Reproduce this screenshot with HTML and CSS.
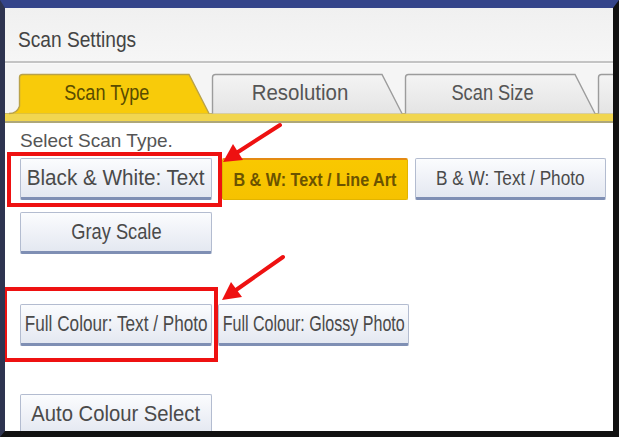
FILE: index.html
```html
<!DOCTYPE html>
<html>
<head>
<meta charset="utf-8">
<link rel="stylesheet" href="styles.css">
</head>
<body>
<div class="screen">
  <div class="header"><span class="t sx87">Scan Settings</span></div>
  <div class="sep"></div>
  <div class="tabs">
    <div class="tab active">
      <svg class="tab-shape" viewBox="0 0 192 41" preserveAspectRatio="none"><path d="M-9,41.5 Q-1,41.5 1.5,34 V4.5 Q1.5,1.5 4.5,1.5 H171 L191,41.5" fill="#f8cb0a" stroke="#b9a24a" stroke-width="1.4"/></svg>
      <span class="t sx82">Scan Type</span>
    </div>
    <div class="tab">
      <svg class="tab-shape" viewBox="0 0 192 41" preserveAspectRatio="none"><defs><linearGradient id="g1" x1="0" y1="0" x2="0" y2="1"><stop offset="0" stop-color="#f4f4f4"/><stop offset="1" stop-color="#e4e4e4"/></linearGradient></defs><path d="M1.5,41.5 V4.5 Q1.5,1.5 4.5,1.5 H171 L191,41.5" fill="url(#g1)" stroke="#9c9c9c" stroke-width="1.4"/></svg>
      <span class="t sx93">Resolution</span>
    </div>
    <div class="tab">
      <svg class="tab-shape" viewBox="0 0 192 41" preserveAspectRatio="none"><path d="M1.5,41.5 V4.5 Q1.5,1.5 4.5,1.5 H171 L191,41.5" fill="url(#g1)" stroke="#9c9c9c" stroke-width="1.4"/></svg>
      <span class="t sx83">Scan Size</span>
    </div>
    <div class="tab">
      <svg class="tab-shape" viewBox="0 0 192 41" preserveAspectRatio="none"><path d="M1.5,41.5 V4.5 Q1.5,1.5 4.5,1.5 H171 L191,41.5" fill="url(#g1)" stroke="#9c9c9c" stroke-width="1.4"/></svg>
    </div>
  </div>
  <div class="strip"></div>
  <div class="content">
    <div class="prompt">Select Scan Type.</div>
    <div class="row row1">
      <div class="btn w192"><span class="t sx94">Black &amp; White: Text</span></div>
      <div class="btn sel w186 ml10"><span class="t sx80b">B &amp; W: Text / Line Art</span></div>
      <div class="btn w191 ml7"><span class="t sx86">B &amp; W: Text / Photo</span></div>
    </div>
    <div class="row row2">
      <div class="btn w192"><span class="t sx83">Gray Scale</span></div>
    </div>
    <div class="row row3">
      <div class="btn w192"><span class="t sx78">Full Colour: Text / Photo</span></div>
      <div class="btn w191 ml6"><span class="t sx73">Full Colour: Glossy Photo</span></div>
    </div>
    <div class="row row4">
      <div class="btn w192"><span class="t sx92">Auto Colour Select</span></div>
    </div>
  </div>
  <div class="mark box1"></div>
  <div class="mark box2"></div>
  <svg class="arrows" viewBox="0 0 619 437" width="619" height="437">
    <line x1="280" y1="125" x2="238" y2="152" stroke="#ee1111" stroke-width="4" stroke-linecap="round"/>
    <polygon points="223,162 243,160 233,144" fill="#ee1111"/>
    <line x1="283" y1="257" x2="236" y2="290" stroke="#ee1111" stroke-width="4" stroke-linecap="round"/>
    <polygon points="222,300 242,297 231,282" fill="#ee1111"/>
  </svg>
</div>
</body>
</html>
```
FILE: styles.css
```css
html, body {
  margin: 0;
  padding: 0;
  background: #111;
}
.screen {
  position: relative;
  width: 619px;
  height: 437px;
  box-sizing: border-box;
  border-top: 8px solid #34448a;
  border-left: 5px solid #2e3450;
  border-right: 6px solid #111;
  border-bottom: 6px solid #111;
  background: #fff;
  display: flex;
  flex-direction: column;
  overflow: hidden;
  font-family: "Liberation Sans", Arial, sans-serif;
  color: #4a4a4a;
}
.t {
  display: inline-block;
  white-space: nowrap;
  transform-origin: center center;
}
.header .t { transform-origin: left center; }
.sx73 { transform: scaleX(0.73); }
.sx78 { transform: scaleX(0.78); }
.sx80b { transform: scaleX(0.85); font-weight: bold; font-size: 19px; }
.sx82 { transform: scaleX(0.82); }
.sx83 { transform: scaleX(0.83); }
.sx86 { transform: scaleX(0.86); font-size: 20px; }
.sx87 { transform: scaleX(0.87); }
.sx92 { transform: scaleX(0.92); }
.sx93 { transform: scaleX(0.93); }
.sx94 { transform: scaleX(0.94); }

.header {
  height: 53px;
  flex: none;
  box-sizing: border-box;
  padding: 19px 0 0 13px;
  background: linear-gradient(#f0f0f0, #f6f6f6);
  font-size: 22px;
  line-height: 26px;
  color: #444;
}
.sep {
  height: 2px;
  flex: none;
  background: #c4c4c4;
  border-bottom: 1px solid #fafafa;
}
.tabs {
  height: 49px;
  flex: none;
  box-sizing: border-box;
  display: flex;
  align-items: flex-end;
  gap: 1px;
  padding-left: 13px;
  background: #f5f5f5;
}
.tab {
  position: relative;
  width: 192px;
  height: 40px;
  flex: none;
  display: flex;
  align-items: center;
  justify-content: center;
  padding-right: 14px;
  box-sizing: border-box;
  font-size: 22px;
  color: #555;
}
.tab.active { color: #5a4c00; z-index: 1; }
.tab-shape {
  position: absolute;
  left: 0;
  top: 0;
  width: 100%;
  height: 100%;
  overflow: visible;
}
.tab .t { position: relative; }
.strip {
  height: 10px;
  flex: none;
  box-sizing: border-box;
  background: #f1d650;
  border-top: 1px solid #c9b866;
  border-bottom: 2px solid #aea779;
}
.content {
  flex: 1;
  padding: 8px 0 0 15px;
  background: #fff;
}
.prompt {
  font-size: 19px;
  line-height: 20px;
  color: #555;
}
.row {
  display: flex;
}
.row1 { margin-top: 7px; }
.row2 { margin-top: 12px; }
.row3 { margin-top: 50px; }
.row4 { margin-top: 48px; }
.btn {
  height: 42px;
  box-sizing: border-box;
  display: flex;
  align-items: center;
  justify-content: center;
  background: linear-gradient(#fbfcfe, #e4e8f1);
  border: 1px solid #b3bcd0;
  border-bottom: 3px solid #7f8fb4;
  border-radius: 2px;
  font-size: 22px;
  color: #4a4a4a;
}
.btn.sel {
  background: linear-gradient(#f9c800, #f6c200);
  border: 1px solid #e2b400;
  border-top: 2px solid #e48a12;
  border-bottom: 1px solid #e2b400;
  color: #6b5300;
}
.w186 { width: 186px; }
.w191 { width: 191px; }
.w192 { width: 192px; }
.ml6 { margin-left: 6px; }
.ml7 { margin-left: 7px; }
.ml10 { margin-left: 10px; }
.mark {
  position: absolute;
  border: 4px solid #ee1111;
  box-sizing: border-box;
}
.box1 { left: 2px; top: 144px; width: 215px; height: 55px; }
.box2 { left: -2px; top: 279px; width: 215px; height: 75px; }
.arrows {
  position: absolute;
  left: -5px;
  top: -8px;
  pointer-events: none;
}
```
